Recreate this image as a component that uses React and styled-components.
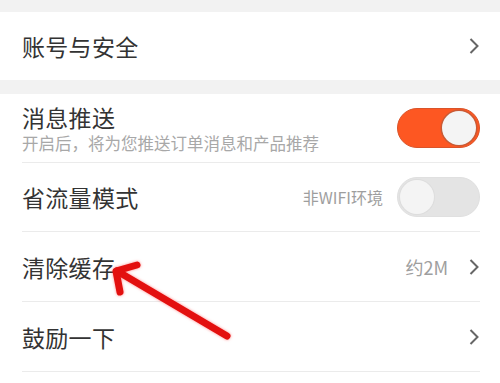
import React, { useState } from "react";
import styled, { createGlobalStyle } from "styled-components";

const Global = createGlobalStyle`
    html, body {
        margin: 0;
        padding: 0;
        background: #f2f2f2;
    }
    body {
        font-family: "Noto Sans CJK SC", "Noto Sans", sans-serif;
        color: #333;
    }
`

const Page = styled.div`
    position: relative;
    width: 500px;
    height: 383px;
    overflow: hidden;
    padding-top: 12px;
    box-sizing: border-box;
    display: flex;
    flex-direction: column;
    gap: 14px;
`

const Group = styled.ul`
    list-style: none;
    margin: 0;
    padding: 0 20px 0 22px;
    background: #fff;
    flex: ${props => props.fill ? 1 : "none"};
`

const Row = styled.li`
    height: ${props => props.h || 69}px;
    display: flex;
    align-items: center;
    justify-content: space-between;
    border-bottom: ${props => props.line ? "1px solid #ebebeb" : "none"};
    box-sizing: border-box;
`

const Texts = styled.div`
    display: flex;
    flex-direction: column;
`

const Title = styled.span`
    font-size: 23px;
    line-height: 28px;
    color: #333;
    letter-spacing: 0.3px;
`

const Sub = styled.span`
    font-size: 16.5px;
    line-height: 22px;
    color: #a8a8a8;
    margin-top: 1px;
`

const Right = styled.div`
    display: flex;
    align-items: center;
    gap: ${props => props.gap || 14}px;
`

const Hint = styled.span`
    font-size: ${props => props.size || 16}px;
    color: #9e9e9e;
`

const Track = styled.button`
    position: relative;
    width: 83px;
    height: 40px;
    border-radius: 20px;
    padding: 0;
    cursor: pointer;
    background: ${props => props.on ? "#fd5722" : "#e4e4e4"};
    border: 1.5px solid ${props => props.on ? "#d9542a" : "#e0e0e0"};
    box-sizing: border-box;
`

const Knob = styled.span`
    position: absolute;
    top: 1.5px;
    left: ${props => props.on ? "44px" : "2px"};
    width: 34px;
    height: 34px;
    border-radius: 50%;
    background: #f4f4f4;
    box-shadow: ${props => props.on ? "0 0 0 1.5px #c85a35" : "0 0 0 1px #ddd"};
`

const Chevron = () => (
    <svg width="12" height="18" viewBox="0 0 12 18">
        <path d="M2.5 2 L9.5 9 L2.5 16" fill="none" stroke="#666" strokeWidth="2" />
    </svg>
)

const Arrow = styled.svg`
    position: absolute;
    left: 0;
    top: 0;
    pointer-events: none;
    filter: drop-shadow(0 0 1.5px rgba(255, 60, 60, .6));
`

const Switch = ({ on, onToggle }) => (
    <Track on={on ? 1 : 0} onClick={onToggle}>
        <Knob on={on ? 1 : 0} />
    </Track>
)

const App = () => {
    const [push, setPush] = useState(true)
    const [saver, setSaver] = useState(false)

    return (
        <Page>
            <Global />
            <Group>
                <Row h={68}>
                    <Title>账号与安全</Title>
                    <Chevron />
                </Row>
            </Group>
            <Group fill={1}>
                <Row line>
                    <Texts>
                        <Title>消息推送</Title>
                        <Sub>开启后，将为您推送订单消息和产品推荐</Sub>
                    </Texts>
                    <Switch on={push} onToggle={() => setPush(!push)} />
                </Row>
                <Row line>
                    <Title>省流量模式</Title>
                    <Right>
                        <Hint size={16}>非WIFI环境</Hint>
                        <Switch on={saver} onToggle={() => setSaver(!saver)} />
                    </Right>
                </Row>
                <Row line h={70}>
                    <Title>清除缓存</Title>
                    <Right gap={20}>
                        <Hint size={18}>约2M</Hint>
                        <Chevron />
                    </Right>
                </Row>
                <Row line h={70}>
                    <Title>鼓励一下</Title>
                    <Chevron />
                </Row>
            </Group>
            <Arrow width="500" height="383" viewBox="0 0 500 383">
                <g stroke="#e3100f" strokeWidth="7" strokeLinecap="round" strokeLinejoin="round" fill="none">
                    <line x1="227" y1="336" x2="117" y2="271" />
                    <polyline points="137,265 116,271 120,292" />
                </g>
            </Arrow>
        </Page>
    )
}

export default App;
